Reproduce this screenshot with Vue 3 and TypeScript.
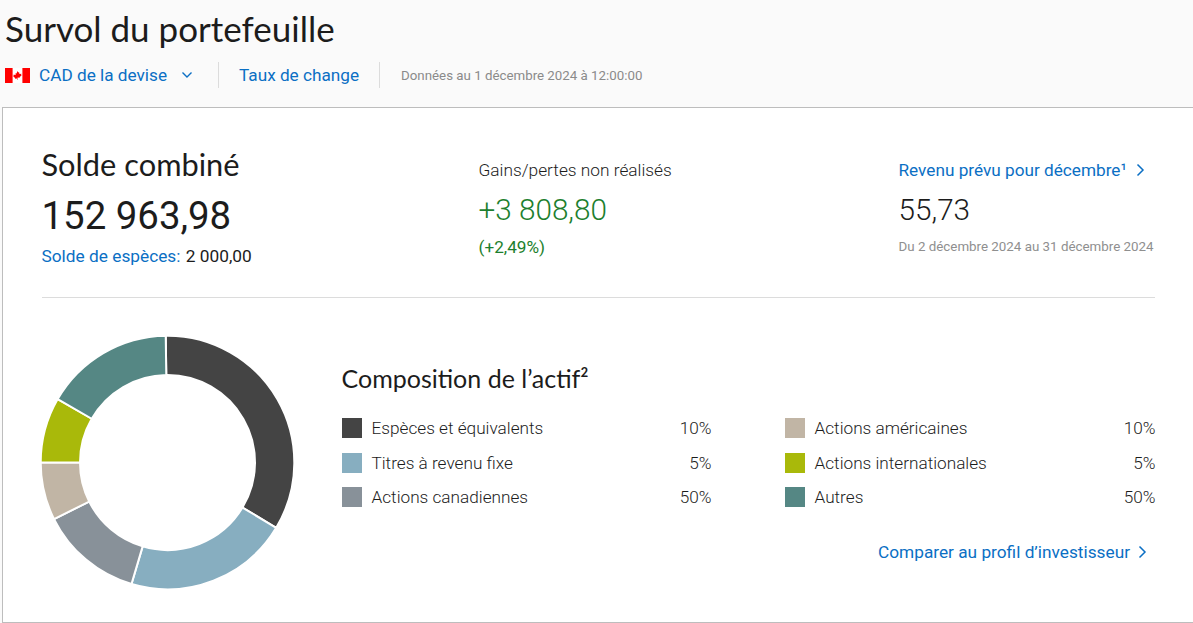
<template>
  <div class="page">
    <h1>Survol du portefeuille</h1>
    <div class="toolbar">
      <svg class="flag" viewBox="0 0 25 15" width="25" height="15">
        <rect width="25" height="15" fill="#fff" />
        <rect width="7.600" height="15" fill="#f00" />
        <rect x="17.400" width="7.600" height="15" fill="#f00" />
        <path d="M12.500 3l.8 1.500.9-.5-.3 2.200 1-1 .3.800 1.300-.2-.4 1.300.5.300-2 1.600.2.700-2.200-.3V12h-.4v-1.600l-2.200.3.200-.7-2-1.600.5-.3-.4-1.300 1.300.2.300-.8 1 1-.3-2.200.9.500z" fill="#f00" />
      </svg>
      <a class="link currency">CAD de la devise</a>
      <svg class="chevron-down" viewBox="0 0 12 8" width="12" height="8">
        <path d="M1.500 1.500L6 6l4.500-4.500" fill="none" stroke="#0b6fc4" stroke-width="1.400" />
      </svg>
      <span class="divider"></span>
      <a class="link">Taux de change</a>
      <span class="divider divider-last"></span>
      <span class="as-of">Données au 1 décembre 2024 à 12:00:00</span>
    </div>

    <section class="card">
      <div class="stats">
        <div class="stat-combined">
          <h2>Solde combiné</h2>
          <div class="balance">152 963,98</div>
          <div class="cash"><a class="link">Solde de espèces:</a> <span class="cash-value">2 000,00</span></div>
        </div>
        <div class="stat-gains">
          <div class="label">Gains/pertes non réalisés</div>
          <div class="gain">+3 808,80</div>
          <div class="gain-pct">(+2,49%)</div>
        </div>
        <div class="stat-income">
          <a class="link income-link">Revenu prévu pour décembre¹
            <svg viewBox="0 0 9 14" width="9" height="14">
              <path d="M1.500 1.500L7 7l-5.500 5.500" fill="none" stroke="#0b6fc4" stroke-width="1.500" />
            </svg>
          </a>
          <div class="income">55,73</div>
          <div class="period">Du 2 décembre 2024 au 31 décembre 2024</div>
        </div>
      </div>

      <div class="allocation">
        <svg class="donut" viewBox="0 0 252 252" width="252" height="252">
          <path v-for="s in slices" :key="s.label" :d="s.path" :fill="s.color" stroke="#fff" stroke-width="2" />
        </svg>
        <div class="details">
          <h3>Composition de l’actif²</h3>
          <ul class="legend">
            <li v-for="s in slices" :key="s.label">
              <span class="swatch" :style="{ background: s.color }"></span>
              <span class="name">{{ s.label }}</span>
              <span class="pct">{{ s.pct }}</span>
            </li>
          </ul>
          <a class="link compare">Comparer au profil d’investisseur
            <svg viewBox="0 0 9 14" width="9" height="14">
              <path d="M1.500 1.500L7 7l-5.500 5.500" fill="none" stroke="#0b6fc4" stroke-width="1.500" />
            </svg>
          </a>
        </div>
      </div>
    </section>
  </div>
</template>

<script setup lang="ts">
const CENTER = 125.5;
const OUTER = 126.8;
const INNER = 87.5;

const point = (r: number, deg: number) => {
  const a = (deg * Math.PI) / 180;
  return `${(CENTER + r * Math.sin(a)).toFixed(2)} ${(CENTER - r * Math.cos(a)).toFixed(2)}`;
};

const arc = (from: number, to: number) => {
  const large = to - from > 180 ? 1 : 0;
  return `M${point(OUTER, from)}A${OUTER} ${OUTER} 0 ${large} 1 ${point(OUTER, to)}L${point(INNER, to)}A${INNER} ${INNER} 0 ${large} 0 ${point(INNER, from)}Z`;
};

// grid fills column by column, so the order here is also the legend order
const slices = [
  { label: "Espèces et équivalents", pct: "10%", color: "#444444", from: -0.8, to: 121 },
  { label: "Titres à revenu fixe", pct: "5%", color: "#87aec0", from: 121, to: 196.5 },
  { label: "Actions canadiennes", pct: "50%", color: "#889199", from: 196.5, to: 243.5 },
  { label: "Actions américaines", pct: "10%", color: "#c1b5a5", from: 243.5, to: 270 },
  { label: "Actions internationales", pct: "5%", color: "#a9b90a", from: 270, to: 300 },
  { label: "Autres", pct: "50%", color: "#558784", from: 300, to: 359.2 }
].map((s) => ({ ...s, path: arc(s.from, s.to) }));
</script>

<style>
html, body {
  margin: 0;
  background: #fafafa;
}
</style>

<style scoped>
.page {
  height: 623px;
  overflow: hidden;
  font-family: Roboto, "Liberation Sans", sans-serif;
  color: #1c1c1c;
}

h1 {
  margin: 0;
  padding: 7px 0 0 5px;
  font: 400 35px/42px Lato, sans-serif;
}

.toolbar {
  display: flex;
  align-items: center;
  height: 26px;
  margin-top: 13px;
  padding-left: 5px;
}

.link {
  color: #0b6fc4;
}

.currency {
  margin-left: 9px;
}

.toolbar .link {
  font-size: 17.200px;
}

.chevron-down {
  margin-left: 14px;
}

.divider {
  width: 1px;
  height: 26px;
  margin: 0 20px 0 25px;
  background: #dcdcdc;
}

.divider-last {
  margin: 0 21px 0 20px;
}

.as-of {
  font-size: 13.300px;
  color: #8a8a8a;
}

.card {
  box-sizing: border-box;
  height: 516px;
  margin: 19px 0 0 2px;
  padding: 0 38px 0 38.500px;
  background: #fff;
  border: 1.500px solid #bdbdbd;
  border-right: none;
}

.stats {
  display: grid;
  grid-template-columns: 437px 420px 1fr;
  height: 190px;
  border-bottom: 1px solid #dcdcdc;
  box-sizing: border-box;
}

h2 {
  margin: 40px 0 0;
  font: 400 30.800px/34px Lato, sans-serif;
}

.balance {
  margin-top: 11px;
  font-size: 38.400px;
  line-height: 46px;
}

.cash {
  margin-top: 6px;
  font-size: 17.300px;
  line-height: 22px;
}

.cash-value {
  margin-left: 1px;
}

.label {
  margin-top: 51px;
  font-size: 17.300px;
  line-height: 22px;
  font-weight: 300;
}

.gain {
  margin-top: 11px;
  font-size: 29.700px;
  line-height: 36px;
  font-weight: 300;
  color: #1d7f2e;
}

.gain-pct {
  margin-top: 8px;
  font-size: 17.200px;
  line-height: 22px;
  color: #1d7f2e;
}

.income-link {
  display: flex;
  align-items: center;
  gap: 9px;
  margin-top: 51px;
  font-size: 17.200px;
  line-height: 22px;
}

.income {
  margin-top: 11px;
  font-size: 29.700px;
  line-height: 36px;
  font-weight: 300;
}

.period {
  margin-top: 9px;
  font-size: 13.350px;
  line-height: 20px;
  color: #8f8f8f;
  white-space: nowrap;
}

.allocation {
  display: flex;
  gap: 48px;
  padding-top: 39px;
}

.donut {
  flex: none;
  overflow: visible;
}

.details {
  flex: 1;
  min-width: 0;
}

h3 {
  margin: 25px 0 0;
  font: 400 25px/32px Lato, sans-serif;
}

.legend {
  display: grid;
  grid-template-rows: repeat(3, 34.500px);
  grid-auto-flow: column;
  grid-template-columns: 370px 371px;
  column-gap: 73px;
  margin: 17px 0 0;
  padding: 0;
  list-style: none;
}

.legend li {
  display: flex;
  align-items: center;
  font-size: 17.200px;
  font-weight: 300;
}

.swatch {
  width: 20px;
  height: 20px;
  margin-right: 10px;
}

.name {
  flex: 1;
}

.compare {
  display: flex;
  align-items: center;
  justify-content: flex-end;
  gap: 8px;
  margin: 26px 8px 0 0;
  font-size: 17.250px;
  line-height: 22px;
}
</style>
